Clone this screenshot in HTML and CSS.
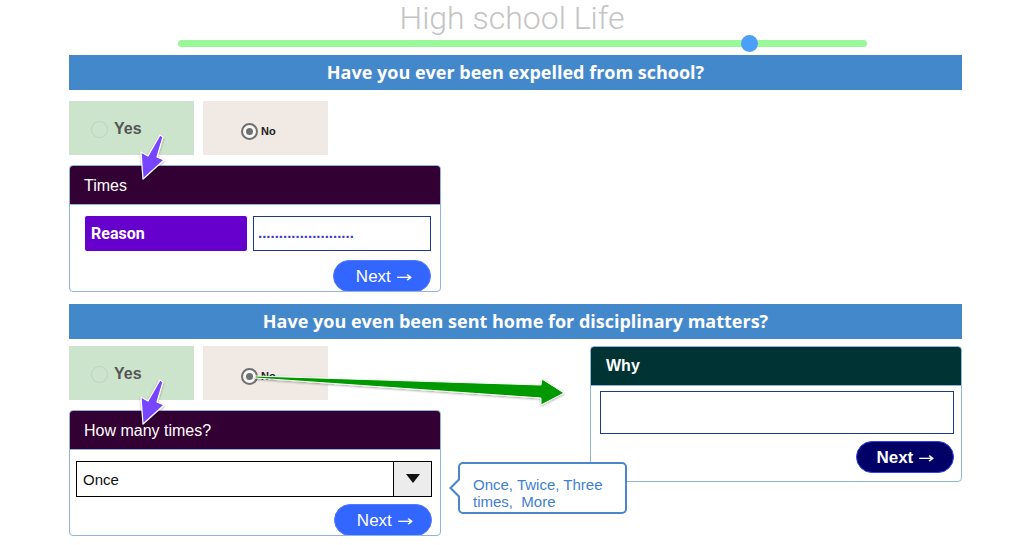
FILE: index.html
```html
<!DOCTYPE html>
<html lang="en">
<head>
<meta charset="utf-8">
<title>High school Life</title>
<link rel="stylesheet" href="styles.css">
</head>
<body>
<div class="page">
  <header class="top">
    <h1 class="title">High school Life</h1>
    <div class="track"><span class="thumb"></span></div>
  </header>

  <section class="q q1">
    <div class="banner">Have you ever been expelled from school?</div>
    <div class="choices">
      <div class="choice yes"><span class="radio"></span><span class="lbl-yes">Yes</span></div>
      <div class="choice no"><span class="radio checked"></span><span class="lbl-no">No</span></div>
    </div>
    <div class="card">
      <div class="card-head">Times</div>
      <div class="card-body">
        <div class="reason-row">
          <div class="reason-label">Reason</div>
          <div class="reason-input">.......................</div>
        </div>
        <div class="actions"><button class="next">Next <span class="arr">→</span></button></div>
      </div>
    </div>
  </section>

  <section class="q q2">
    <div class="banner">Have you even been sent home for disciplinary matters?</div>
    <div class="split">
      <div class="left-col">
        <div class="choices">
          <div class="choice yes"><span class="radio"></span><span class="lbl-yes">Yes</span></div>
          <div class="choice no"><span class="radio checked"></span><span class="lbl-no">No</span></div>
        </div>
        <div class="card">
          <div class="card-head">How many times?</div>
          <div class="card-body select-body">
            <div class="select">
              <span class="select-value">Once</span>
              <span class="select-btn"><svg width="14" height="10" viewBox="0 0 14 10"><polygon points="0,0 14,0 7,9" fill="#111"/></svg></span>
            </div>
            <div class="actions"><button class="next">Next <span class="arr">→</span></button></div>
          </div>
        </div>
      </div>
      <div class="card why">
        <div class="card-head why-head">Why</div>
        <div class="card-body why-body">
          <div class="why-input"></div>
          <div class="actions"><button class="next dark">Next <span class="arr">→</span></button></div>
        </div>
      </div>
    </div>
  </section>

  <div class="tooltip">Once, Twice, Three times,&nbsp; More</div>
</div>

<svg class="overlay" width="1028" height="545" viewBox="0 0 1028 545">
  <defs>
    <filter id="glow" x="-20%" y="-20%" width="140%" height="140%">
      <feDropShadow dx="0" dy="1" stdDeviation="1.2" flood-color="#000" flood-opacity="0.35"/>
    </filter>
  </defs>
  <g filter="url(#glow)">
    <polygon points="160,135 163,137 157,157 164,160 143,179 141,152 148,156" fill="#7744ff" stroke="#fff" stroke-width="1.2" stroke-linejoin="round"/>
    <polygon points="160,380 163,382 157,402 164,405 143,424 141,397 148,401" fill="#7744ff" stroke="#fff" stroke-width="1.2" stroke-linejoin="round"/>
    <polygon points="255,376 541,385 542,379 564,393 541,405 541,398 255,378" fill="#009900" stroke="#fff" stroke-width="1" stroke-linejoin="round"/>
  </g>
</svg>
</body>
</html>
```

FILE: styles.css
```css
* { box-sizing: border-box; }

html, body {
  margin: 0;
  padding: 0;
  background: #fff;
}

body {
  width: 1028px;
  height: 545px;
  overflow: hidden;
  position: relative;
  font-family: "Liberation Sans", Arial, sans-serif;
}

.page {
  width: 893px;
  margin-left: 69px;
  position: relative;
}

.top {
  height: 55px;
  padding-top: 1px;
}

.title {
  margin: 0;
  text-align: center;
  font-family: Roboto, sans-serif;
  font-weight: 300;
  font-size: 32px;
  line-height: 34px;
  color: #c4c4c4;
  padding-right: 7px;
}

.track {
  position: relative;
  margin: 5px 0 0 109px;
  width: 689px;
  height: 7px;
  border-radius: 4px;
  background: #99f999;
}

.thumb {
  position: absolute;
  left: 563px;
  top: -5px;
  width: 17px;
  height: 17px;
  border-radius: 50%;
  background: #4d9ef8;
}

.banner {
  height: 35px;
  background: #4488cc;
  color: #fff;
  text-align: center;
  font-family: "Open Sans", sans-serif;
  font-weight: 700;
  font-size: 18px;
  line-height: 35px;
}

.q1 .banner { margin-bottom: 11px; }
.q2 { margin-top: 12px; }
.q2 .banner { margin-bottom: 7px; }

.choices {
  display: flex;
  gap: 9px;
}

.choice {
  width: 125px;
  height: 54px;
  display: flex;
  align-items: center;
}

.choice.yes {
  background: #cce3cc;
  padding: 2px 0 0 22px;
  gap: 6px;
}

.choice.no {
  background: #f1e9e3;
  padding: 6px 0 0 38px;
  gap: 3px;
}

.radio {
  flex: none;
  width: 17px;
  height: 17px;
  border-radius: 50%;
  border: 1px solid #c3cfc3;
  background: transparent;
  position: relative;
}

.radio.checked {
  border: 2px solid #707070;
  background: #f7f7f7;
}

.radio.checked::after {
  content: "";
  position: absolute;
  left: 3px;
  top: 3px;
  width: 7px;
  height: 7px;
  border-radius: 50%;
  background: #707070;
}

.lbl-yes {
  font-weight: 700;
  font-size: 16px;
  color: #555;
}

.lbl-no {
  font-weight: 700;
  font-size: 11px;
  color: #222;
}

.card {
  width: 372px;
  border: 1px solid #8fb6da;
  border-radius: 4px;
  overflow: hidden;
  background: #fff;
  margin-top: 10px;
}

.card-head {
  height: 39px;
  background: #330033;
  border-bottom: 1px solid #8fb6da;
  color: #fff;
  font-size: 16px;
  line-height: 38px;
  padding: 1px 0 0 14px;
}

.card-body {
  padding: 11px 9px 0 15px;
}

.reason-row {
  display: flex;
  gap: 6px;
  height: 35px;
}

.reason-label {
  width: 162px;
  background: #6600cc;
  border-radius: 2px;
  color: #fff;
  font-family: Roboto, sans-serif;
  font-weight: 700;
  font-size: 16px;
  line-height: 36px;
  padding-left: 6px;
}

.reason-input {
  flex: 1;
  border: 1px solid #1d3b8b;
  color: #3a3ad8;
  font-size: 15px;
  font-weight: 700;
  line-height: 31px;
  padding-left: 4px;
}

.actions {
  display: flex;
  justify-content: flex-end;
  margin-top: 9px;
  margin-bottom: -1px;
}

.next {
  width: 98px;
  height: 32px;
  border: 1px solid #5577ff;
  border-radius: 16px;
  background: #3366ff;
  color: #fff;
  font-family: "Liberation Sans", Arial, sans-serif;
  font-size: 17px;
  padding: 1px 0 0;
  line-height: 30px;
}

.arr {
  display: inline-block;
  font-family: "DejaVu Sans", sans-serif;
  font-size: 15px;
  font-weight: 400;
  transform: scaleX(1.3);
  transform-origin: left center;
}

.next.dark {
  background: #000066;
  border-color: #3344ee;
  font-weight: 700;
  padding-right: 3px;
}

.split {
  display: flex;
  justify-content: space-between;
  align-items: flex-start;
}

.select-body {
  padding: 11px 8px 0 6px;
}

.select {
  height: 36px;
  border: 1px solid #000;
  display: flex;
  align-items: stretch;
}

.select-value {
  flex: 1;
  font-size: 15px;
  line-height: 35px;
  padding-left: 6px;
  color: #111;
}

.select-btn {
  width: 38px;
  border-left: 1px solid #000;
  background: #ececec;
  display: flex;
  align-items: center;
  justify-content: center;
}

.select-body .actions { margin-top: 7px; }

.why {
  margin-top: 0;
  padding-bottom: 8px;
}

.why-head {
  background: #003333;
  font-weight: 700;
  height: 39px;
  padding: 0 0 0 15px;
}

.why-body {
  padding: 5px 7px 0 9px;
}

.why-input {
  height: 43px;
  border: 1px solid #1d3b8b;
}

.why-body .actions { margin-top: 7px; margin-bottom: 0; }

.tooltip {
  position: absolute;
  left: 389px;
  top: 462px;
  width: 169px;
  height: 52px;
  border: 2px solid #4a86cc;
  border-radius: 5px;
  background: #fff;
  color: #3f7fcf;
  font-size: 15px;
  line-height: 17px;
  padding: 12px 8px 0 13px;
}

.tooltip::before {
  content: "";
  position: absolute;
  left: -11px;
  top: 13px;
  border-style: solid;
  border-width: 11px 11px 11px 0;
  border-color: transparent #4a86cc transparent transparent;
}

.tooltip::after {
  content: "";
  position: absolute;
  left: -8px;
  top: 15px;
  border-style: solid;
  border-width: 9px 9px 9px 0;
  border-color: transparent #fff transparent transparent;
}

.overlay {
  position: absolute;
  left: 0;
  top: 0;
  pointer-events: none;
}
```
